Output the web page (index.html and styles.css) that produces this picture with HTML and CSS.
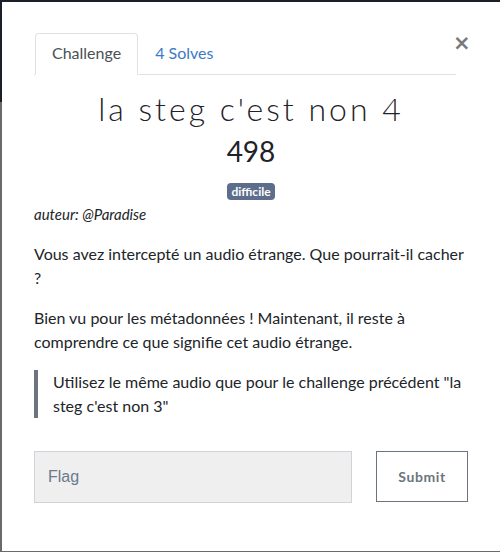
FILE: index.html
```html
<!DOCTYPE html>
<html lang="fr">
<head>
<meta charset="utf-8">
<link rel="stylesheet" href="styles.css">
</head>
<body>
<div class="backdrop">
  <div class="modal">
    <div class="tabs-row">
      <ul class="tabs">
        <li class="tab active">Challenge</li>
        <li class="tab">4 Solves</li>
      </ul>
      <span class="close">&times;</span>
    </div>
    <h2 class="title">la steg c'est non 4</h2>
    <h3 class="value">498</h3>
    <div class="tags"><span class="badge">difficile</span></div>
    <div class="desc">
      <p class="author">auteur: @Paradise</p>
      <p>Vous avez intercepté un audio étrange. Que pourrait-il cacher ?</p>
      <p>Bien vu pour les métadonnées ! Maintenant, il reste à comprendre ce que signifie cet audio étrange.</p>
      <blockquote>Utilisez le même audio que pour le challenge précédent "la steg c'est non 3"</blockquote>
    </div>
    <div class="submit-row">
      <input class="flag" type="text" placeholder="Flag">
      <button class="submit">Submit</button>
    </div>
  </div>
</div>
</body>
</html>
```
FILE: styles.css
```css
html, body {
  margin: 0;
  padding: 0;
}
body {
  width: 500px;
  height: 552px;
  overflow: hidden;
  background: linear-gradient(to bottom, #1b2026 0, #1b2026 102px, #6a6a6a 102px);
  font-family: Lato, "Open Sans", sans-serif;
  color: #212529;
}
.backdrop {
  padding: 2px 0 0 2px;
}
.modal {
  width: 498px;
  height: 549px;
  background: #fff;
  box-sizing: border-box;
  padding: 31px 32px 0 32px;
}
.tabs-row {
  display: flex;
  align-items: flex-start;
}
.tabs {
  flex: 1;
  display: flex;
  list-style: none;
  margin: 0;
  padding: 0 0 0 1px;
  border-bottom: 1px solid #dee2e6;
}
.tab {
  font-size: 16px;
  line-height: 24px;
  padding: 7px 16px 9px;
  border: 1px solid transparent;
  border-radius: 4px 4px 0 0;
  margin-bottom: -1px;
  color: #3b7ac8;
}
.tab.active {
  color: #495057;
  border-color: #dee2e6 #dee2e6 #fff;
  background: #fff;
}
.close {
  width: 12px;
  margin-left: 1px;
  margin-right: -1px;
  font-family: "DejaVu Sans", sans-serif;
  font-size: 21px;
  font-weight: bold;
  line-height: 1;
  color: #7a7a7a;
  margin-top: 0;
  position: relative;
  left: -4px;
}
.title {
  text-align: center;
  font-weight: 300;
  font-size: 32px;
  letter-spacing: 3px;
  line-height: 38px;
  margin: 15px 0 0;
  color: #1f2328;
}
.value {
  text-align: center;
  font-weight: 400;
  font-size: 28px;
  line-height: 34px;
  margin: 6px 0 0;
  color: #1f2328;
}
.tags {
  text-align: center;
  margin-top: 13px;
  line-height: 17px;
}
.badge {
  display: inline-block;
  background: #5c6e8b;
  color: #fff;
  font-size: 12px;
  font-weight: 700;
  padding: 1px 4px;
  border-radius: 4px;
  line-height: 15px;
}
.desc {
  margin-top: 2px;
  font-size: 16px;
  line-height: 24px;
}
.desc p {
  margin: 0 0 16px;
}
.desc .author {
  font-style: italic;
  font-size: 15px;
  margin-bottom: 16px;
}
blockquote {
  margin: 0;
  border-left: 4px solid #6c757d;
  padding: 0 0 0 15px;
  line-height: 24px;
}
.submit-row {
  display: flex;
  margin-top: 33px;
  gap: 24px;
}
.flag {
  width: 318px;
  height: 52px;
  box-sizing: border-box;
  background: #efefef;
  border: 1px solid #cfd4da;
  font-family: "Liberation Sans", Arial, sans-serif;
  font-size: 16px;
  padding: 0 13px;
  margin: 0;
  color: #6c757d;
}
.flag::placeholder {
  color: #6c7a8a;
}
.submit {
  width: 92px;
  height: 51px;
  box-sizing: border-box;
  background: #fff;
  border: 1px solid #6c757d;
  color: #6c757d;
  font-family: Lato, sans-serif;
  font-weight: 700;
  font-size: 14px;
  letter-spacing: 0.6px;
  margin: 0;
  padding: 0;
}
```
